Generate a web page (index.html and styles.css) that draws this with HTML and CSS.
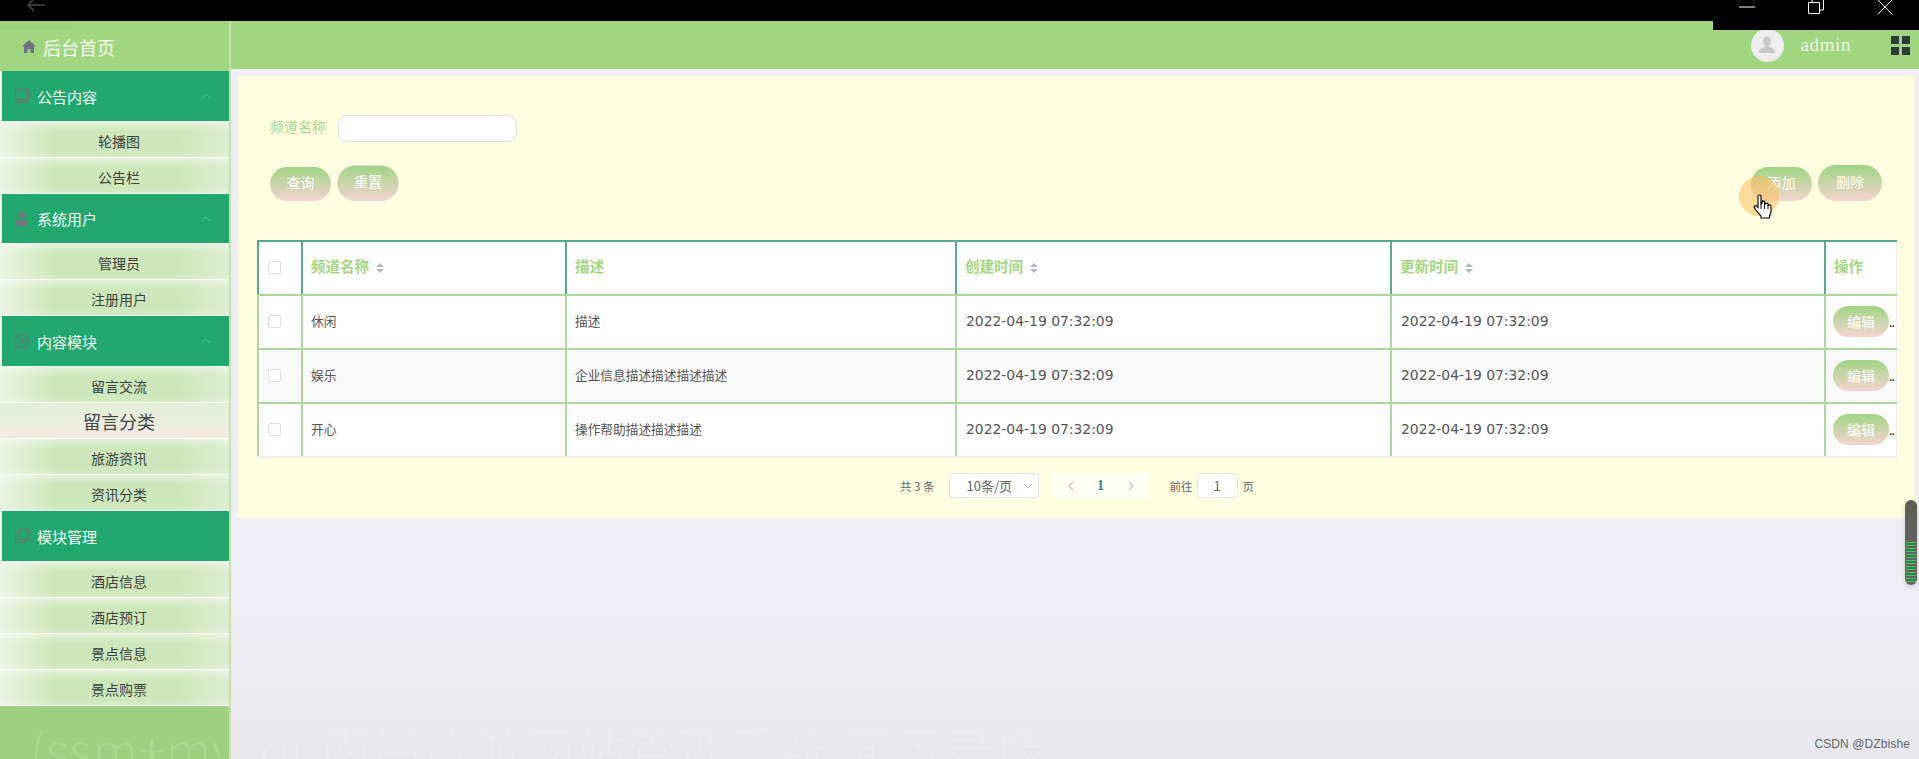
FILE: index.html
```html
<!DOCTYPE html>
<html lang="zh">
<head>
<meta charset="utf-8">
<title>频道管理</title>
<link rel="stylesheet" href="styles.css">
</head>
<body>
<div class="shell">
  <div class="topbar">
    <svg class="back" width="20" height="14" viewBox="0 0 20 14"><path d="M19 5H2M8-1L2 5l6 6" fill="none" stroke="#4a4a4a" stroke-width="1.500"/></svg>
  </div>
  <div class="app">
    <aside class="sidebar">
      <div class="brand">
        <svg class="home" width="14" height="13" viewBox="0 0 14 13"><path d="M7 0L0 6.500h2V13h3.500V9h3v4H12V6.500h2z" fill="#6c7083"/></svg>
        <span>后台首页</span>
      </div>
      <div class="group">
        <svg class="gicon" width="16" height="16" viewBox="0 0 16 16"><path d="M1.500 1.500h13v10h-13zM4 11.500l-1 4M12 11.500l1 4M3 14h10" fill="none" stroke="#5f7d75" stroke-width="1.300"/></svg>
        <span>公告内容</span>
        <svg class="chev" width="10" height="6" viewBox="0 0 10 6"><path d="M1 5l4-4 4 4" fill="none" stroke="#56bd90" stroke-width="1"/></svg>
      </div>
      <div class="item">轮播图</div>
      <div class="item">公告栏</div>
      <div class="group group-tight">
        <svg class="gicon" width="16" height="16" viewBox="0 0 16 16"><circle cx="8" cy="4" r="3.500" fill="#6f7a80"/><path d="M2 15v-3.500q0-2.500 3-2.500h6q3 0 3 2.500V15z" fill="#6f7a80"/></svg>
        <span>系统用户</span>
        <svg class="chev" width="10" height="6" viewBox="0 0 10 6"><path d="M1 5l4-4 4 4" fill="none" stroke="#56bd90" stroke-width="1"/></svg>
      </div>
      <div class="item">管理员</div>
      <div class="item">注册用户</div>
      <div class="group">
        <svg class="gicon" width="16" height="16" viewBox="0 0 16 16"><path d="M8 1.500a6.500 6.500 0 1 1-3.500 12L1.500 15l.8-3.500A6.500 6.500 0 0 1 8 1.500zM5 6.500h6M5 9.500h6" fill="none" stroke="#5f7d75" stroke-width="1.300"/></svg>
        <span>内容模块</span>
        <svg class="chev" width="10" height="6" viewBox="0 0 10 6"><path d="M1 5l4-4 4 4" fill="none" stroke="#56bd90" stroke-width="1"/></svg>
      </div>
      <div class="item">留言交流</div>
      <div class="item item-big">留言分类</div>
      <div class="item">旅游资讯</div>
      <div class="item">资讯分类</div>
      <div class="group">
        <svg class="gicon" width="16" height="16" viewBox="0 0 16 16"><path d="M5 1.500h9.500v10H5zM5 4.500H1.500v10H11v-3" fill="none" stroke="#5f7d75" stroke-width="1.300"/></svg>
        <span>模块管理</span>
      </div>
      <div class="item">酒店信息</div>
      <div class="item">酒店预订</div>
      <div class="item">景点信息</div>
      <div class="item">景点购票</div>
    </aside>
    <main class="main">
      <header class="header">
        <div class="avatar">
          <svg width="20" height="20" viewBox="0 0 20 20"><path d="M10 1.500c2.800 0 4 2 4 4.500 0 2-1 3.500-2 4.500v1.500c2 1 6 1.500 6 5v1H2v-1c0-3.500 4-4 6-5v-1.500c-1-1-2-2.500-2-4.500 0-2.500 1.200-4.500 4-4.500z" fill="#c8c8c8"/></svg>
        </div>
        <span class="user">admin</span>
        <div class="grid-icon"><i></i><i></i><i></i><i></i></div>
      </header>
      <section class="panel">
        <div class="search">
          <label class="search-label">频道名称</label>
          <div class="search-input"></div>
        </div>
        <div class="actions">
          <div class="actions-left">
            <button class="pill pill-a">查询</button>
            <button class="pill pill-b">重置</button>
          </div>
          <div class="actions-right">
            <button class="pill pill-a">添加</button>
            <button class="pill pill-c">删除</button>
          </div>
        </div>
        <table class="table">
          <colgroup>
            <col class="c-check"><col class="c-name"><col class="c-desc"><col class="c-time"><col class="c-time2"><col class="c-op">
          </colgroup>
          <thead>
            <tr>
              <th><span class="check"></span></th>
              <th>频道名称<span class="sort"></span></th>
              <th>描述</th>
              <th>创建时间<span class="sort"></span></th>
              <th>更新时间<span class="sort"></span></th>
              <th>操作</th>
            </tr>
          </thead>
          <tbody>
            <tr>
              <td><span class="check"></span></td><td>休闲</td><td>描述</td>
              <td class="time">2022-04-19 07:32:09</td><td class="time">2022-04-19 07:32:09</td>
              <td class="op"><button class="edit">编辑</button>..</td>
            </tr>
            <tr class="alt">
              <td><span class="check"></span></td><td>娱乐</td><td>企业信息描述描述描述描述</td>
              <td class="time">2022-04-19 07:32:09</td><td class="time">2022-04-19 07:32:09</td>
              <td class="op"><button class="edit">编辑</button>..</td>
            </tr>
            <tr>
              <td><span class="check"></span></td><td>开心</td><td>操作帮助描述描述描述</td>
              <td class="time">2022-04-19 07:32:09</td><td class="time">2022-04-19 07:32:09</td>
              <td class="op"><button class="edit">编辑</button>..</td>
            </tr>
          </tbody>
        </table>
        <nav class="pager">
          <span class="pager-text">共 3 条</span>
          <div class="page-size"><span>10条/页</span>
            <svg width="10" height="6" viewBox="0 0 10 6"><path d="M1 1l4 4 4-4" fill="none" stroke="#c0c4cc"/></svg>
          </div>
          <div class="pages">
            <svg width="7" height="10" viewBox="0 0 7 10"><path d="M6 1L2 5l4 4" fill="none" stroke="#c0c4cc" stroke-width="1.200"/></svg>
            <b>1</b>
            <svg width="7" height="10" viewBox="0 0 7 10"><path d="M1 1l4 4-4 4" fill="none" stroke="#c0c4cc" stroke-width="1.200"/></svg>
          </div>
          <span class="pager-text goto">前往</span>
          <div class="page-input">1</div>
          <span class="pager-text">页</span>
        </nav>
      </section>
    </main>
  </div>

  <div class="chrome">
    <svg width="16" height="2" viewBox="0 0 16 2"><path d="M0 1h16" stroke="#fff" stroke-width="1"/></svg>
    <svg width="16" height="14" viewBox="0 0 16 14"><path d="M.5 2.500h11v11H.5zM4 2.500V-1h11.500v11H11.500" fill="none" stroke="#fff"/></svg>
    <svg width="16" height="15" viewBox="0 0 16 15"><path d="M.5-.5l15 15M15.500-.5l-15 15" stroke="#fff"/></svg>
  </div>
  <div class="strip"></div>
  <div class="scroll"><div class="scroll-lines"></div></div>
  <div class="click-dot"></div>
  <svg class="hand" width="20" height="25" viewBox="0 0 20 25"><path d="M5 2.500a1.500 1.500 0 0 1 3 0V10l1-.4V8a1.400 1.400 0 0 1 2.700 0v2l1-.1a1.300 1.300 0 0 1 2.500.4v1l.8-.1a1.300 1.300 0 0 1 2 1.200v5c0 2-.7 3-1.500 4.500V24H8v-2C6 20 3.500 17 1.500 14c-1-1.500.8-3 2-2L5 13.500z" fill="#fff" stroke="#111" stroke-width="1.200"/><path d="M8 10v5M11.500 10v5M15 11v4" stroke="#111"/></svg>
  <div class="watermark">(ssm+mysql)南昌旅游网站管理系统 演示录像</div>
  <div class="credit">CSDN @DZbishe</div>
</div>
</body>
</html>
```

FILE: styles.css
```css
* { box-sizing: border-box; }
html, body { margin: 0; height: 100%; overflow: hidden; }
body { font-family: "Noto Sans CJK SC", "Liberation Sans", sans-serif; }
.shell { position: relative; width: 1919px; height: 759px; overflow: hidden; display: flex; flex-direction: column; background: #000; }
.topbar { height: 21px; flex: none; background: #000; padding-left: 26px; }
.back { display: block; }
.app { flex: 1; display: flex; min-height: 0; }

.sidebar { width: 231px; flex: none; background: #9ed07f; border-right: 2px solid #c3e0b0; }
.brand { height: 50px; display: flex; align-items: center; gap: 7px; padding: 2px 0 0 22px; font-size: 18px; color: #fbfff3; background: #a0d680; }
.home { flex: none; margin-bottom: 2px; }
.group { height: 51px; border-bottom: 1px solid #f2f9ed; border-left: 2px solid #eef6e8; display: flex; align-items: center; padding-left: 12px; background: #22a86f; color: #f2fff6; font-size: 15px; position: relative; }
.group-tight { height: 50px; }
.gicon { flex: none; margin-right: 7px; }
.chev { position: absolute; left: 199px; top: 22px; }
.item { height: 36px; border-bottom: 1px solid #f7fbf4; padding: 2px 0 0 9px; display: flex; align-items: center; justify-content: center; font-size: 14px; color: #3b3f3b; background: linear-gradient(90deg, #eaf4e2 0, #cde7ba 24%, #cde7ba 78%, #dcedd0 100%); box-shadow: inset 0 9px 9px -6px rgba(255,255,255,.6), inset 0 -6px 8px -6px rgba(255,255,255,.4); }
.item-big { font-size: 18px; padding-top: 0; background: linear-gradient(180deg, #e4efd9 0, #e8eedd 55%, #f6e9e2 100%); box-shadow: none; color: #444; }

.main { flex: 1; min-width: 0; background: linear-gradient(180deg, #efeff5 0%, #eeeef4 78%, #e8e8ec 100%); padding: 0 4px 0 0; }
.header { height: 48px; margin-right: -4px; background: #a0d680; display: flex; align-items: center; justify-content: flex-end; padding-right: 9px; position: relative; }
.avatar { width: 33px; height: 33px; border-radius: 50%; background: #eeeeee; display: flex; align-items: center; justify-content: center; margin-right: 17px; }
.user { font-family: "Liberation Serif", serif; font-size: 19px; letter-spacing: .6px; color: #eef5e6; margin-right: 40px; }
.grid-icon { width: 19px; height: 19px; display: grid; grid-template-columns: 8px 8px; grid-template-rows: 8px 8px; gap: 3px; }
.grid-icon i { background: #2f3a3a; }

.panel { margin: 7px 0 0 7px; height: 442px; background: #fffee0; padding: 39px 18px 0 19px; }
.search { display: flex; align-items: center; height: 27px; padding-left: 13px; }
.search-label { width: 68px; padding-bottom: 6px; font-size: 14px; color: #a8d98d; }
.search-input { width: 179px; height: 27px; background: #fff; border: 1px solid #e0e0ea; border-radius: 9px; }
.actions { display: flex; justify-content: space-between; margin-top: 23px; height: 36px; padding-left: 13px; padding-right: 15px; align-items: center; }
.actions-left, .actions-right { display: flex; gap: 6px; align-items: center; }
.pill { display: block; padding: 0 0 4px; font: inherit; font-size: 14px; color: #fff; border: 0; border-radius: 18px; background: linear-gradient(180deg, #9fd582 0%, #f4d4d0 100%); }
.pill-a { width: 61px; height: 34px; margin-top: 1px; }
.pill-b { width: 62px; height: 36px; border: 1px solid #d9dfd0; }
.pill-c { width: 64px; height: 36px; }

.table { width: 1638px; margin-top: 39px; border-collapse: collapse; table-layout: fixed; background: #fff; }
.c-check { width: 44px; }
.c-name { width: 264px; }
.c-desc { width: 390px; }
.c-time { width: 435px; }
.c-time2 { width: 434px; }
.c-op { width: 71px; }
.table th, .table td { height: 54px; padding: 0 8px 3px; text-align: left; font-size: 12.7px; white-space: nowrap; overflow: hidden; border: 2px solid #abd99b; color: #555; font-weight: 400; }
.table th { font-size: 14.5px; font-weight: 700; padding-bottom: 5px; color: #a3d781; border-color: #56ad8b; border-bottom-color: #abd99b; }
.table th:first-child, .table td:first-child { padding: 0 0 1px 9px; }
.table th:last-child, .table td:last-child { border-right: 1px solid #eceeee; }
.table tbody tr:last-child td { border-bottom: 2px solid #eeeeee; }
.alt td { background: #f9f9f9; }
.table td.time { font-family: "DejaVu Sans", sans-serif; font-size: 13.9px; padding: 0 0 2px 9px; }
.check { display: block; width: 13px; height: 13px; border: 1px solid #dcdfe6; border-radius: 2px; background: #fff; }
.sort { display: inline-block; position: relative; margin-left: 7px; width: 8px; height: 10px; vertical-align: -1px; }
.sort::before, .sort::after { content: ""; position: absolute; left: 0; border-left: 4px solid transparent; border-right: 4px solid transparent; }
.sort::before { top: 0; border-bottom: 4px solid #b4b8c6; }
.sort::after { bottom: 0; border-top: 4px solid #b4b8c6; }
.table td.op { padding: 0 0 1px 7px; color: #222; letter-spacing: -1px; }
.edit { display: inline-block; width: 56px; height: 31px; padding: 0 0 2px; border: 0; border-radius: 16px; font: inherit; font-size: 14px; letter-spacing: normal; color: #fff; background: linear-gradient(180deg, #9fd582 0%, #f4d4d0 100%); }

.pager { display: flex; align-items: center; height: 25px; margin-top: 15px; padding-left: 643px; }
.pager-text { font-size: 11.5px; color: #666; }
.page-size { width: 90px; height: 25px; margin-left: 14px; background: #fff; border: 1px solid #e4e7ed; border-radius: 3px; display: flex; align-items: center; justify-content: space-between; padding: 0 5px 0 17px; font-size: 13px; color: #666; }
.pages { width: 96px; height: 25px; margin-left: 14px; background: #fffff3; display: flex; align-items: center; justify-content: space-between; padding: 0 14px; font-family: "Liberation Serif", serif; font-size: 14px; color: #1d8f7f; }
.goto { margin-left: 21px; }
.page-input { width: 41px; height: 25px; margin: 0 5px 0 4px; background: #fff; border: 1px solid #e4e7ed; border-radius: 4px; text-align: center; line-height: 23px; font-size: 13px; color: #666; }

.chrome { position: absolute; top: 0; right: 0; width: 206px; height: 30px; background: #000; display: flex; align-items: flex-start; padding-left: 26px; gap: 53px; }
.chrome svg:first-child { margin-top: 6px; }
.strip { position: absolute; left: 0; top: 21px; width: 72px; height: 9px; background: #9fd17f; }
.scroll { position: absolute; left: 1905px; top: 500px; width: 12px; height: 85px; border-radius: 6px; background: linear-gradient(180deg, #5d5d50 0, #606060 40%); box-shadow: 0 2px 5px rgba(0,0,0,.15); overflow: hidden; }
.scroll-lines { margin: 42px 1px 0; height: 40px; background: repeating-linear-gradient(180deg, #22e04e 0 1px, transparent 1px 3px); }
.click-dot { position: absolute; left: 1739px; top: 176px; width: 40px; height: 40px; border-radius: 50%; background: rgba(253,190,90,.55); }
.hand { position: absolute; left: 1753px; top: 194px; }
.watermark { position: absolute; left: 30px; top: 711px; font-size: 51px; font-weight: 300; white-space: nowrap; color: rgba(255,255,255,.13); }
.credit { position: absolute; right: 9px; top: 737px; font-family: "Liberation Sans", sans-serif; font-size: 12px; letter-spacing: .1px; color: #666; }
```
